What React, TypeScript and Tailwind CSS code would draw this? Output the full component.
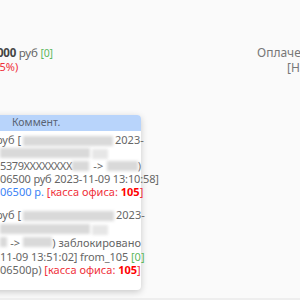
import React from 'react';

// blurred placeholder for hidden personal data
const Blur = ({ w, light }: { w: number; light?: boolean }) => (
  <span
    className={`inline-block h-[10px] align-middle blur-[1.5px] ${light ? 'bg-[#e6e6e6]' : 'bg-[#d9d9d9]'}`}
    style={{ width: w }}
  />
);

const Kassa = () => (
  <span className="text-[#f0303a]">
    [касса офиса: <b className="font-bold text-[#ff0000]">105</b>]
  </span>
);

const Line = ({ children, shift = 0, h = 13 }: { children: React.ReactNode; shift?: number; h?: number }) => (
  <div className="flex items-center whitespace-nowrap leading-[13px]" style={{ marginLeft: shift, height: h }}>
    {children}
  </div>
);

export default function App() {
  return (
    <div className="relative h-[300px] w-[300px] overflow-hidden bg-[#fafafa] font-['Noto_Sans',sans-serif] text-[11px] text-[#666]">
      {/* top summary row */}
      <div className="pt-[45px]">
        <div className="flex h-[15px] items-center whitespace-nowrap">
          <div className="ml-[-25px] text-[11.5px] tracking-[-0.2px]">
            <b className="font-bold text-[#444]">106 000</b> руб{' '}
            <span className="text-[10.5px] text-[#5cb85c]">[0]</span>
          </div>
          <div className="ml-auto mr-[-20px] w-[63px] text-[12px] text-[#777]">Оплачено</div>
        </div>
        <div className="flex h-[15px] items-center whitespace-nowrap">
          <div className="ml-[-4px] text-[11px] text-[#f0303a]">-5%)</div>
          <div className="ml-auto mr-[-40px] w-[53px] text-[12px] text-[#777]">[Наличные]</div>
        </div>
      </div>

      {/* comment popup */}
      <div className="ml-[-12px] mt-[40px] w-[153px] rounded-[4px] bg-white shadow-[0_2px_7px_rgba(0,0,0,0.2)]">
        <div className="flex h-[16px] items-center rounded-t-[4px] bg-[#b8d4fb] pl-[24px] text-[10.5px] text-[#5a6474]">
          Коммент.
        </div>
        <div className="pb-[13px] pl-[12px] pt-[2px] text-[#666]">
          <Line shift={-4}>
            руб [<span className="mx-[2px]"><Blur w={90} /></span>2023-
          </Line>
          <Line>
            <Blur w={90} />
            <span className="ml-[2px]"><Blur w={16} light /></span>
          </Line>
          <Line>
            <span className="tracking-[-0.4px]">5379XXXXXXXX</span>
            <Blur w={20} />
            <span className="mx-[4px]">-&gt;</span>
            <Blur w={35} />)
          </Line>
          <Line>
            <span className="tracking-[-0.15px]">06500 руб 2023-11-09 13:10:58]</span>
          </Line>
          <Line>
            <span className="text-[#3b82f6]">06500 р.</span>&nbsp;<Kassa />
          </Line>
          <div className="h-[10px]" />
          <Line shift={-4} h={13.75}>
            руб [<span className="mx-[2px]"><Blur w={91} /></span>2023-
          </Line>
          <Line h={13.75}>
            <Blur w={90} />
            <span className="ml-[2px]"><Blur w={16} light /></span>
          </Line>
          <Line h={13.75}>
            <Blur w={10} />
            <span className="mx-[3px]">-&gt;</span>
            <Blur w={40} />) заблокировано
          </Line>
          <Line h={13.75}>
            <span className="tracking-[-0.1px]">11-09 13:51:02] from_105</span>&nbsp;
            <span className="text-[#5cb85c]">[0]</span>
          </Line>
          <Line h={13.75}>
            06500р)&nbsp;<Kassa />
          </Line>
        </div>
      </div>

      <div className="absolute bottom-0 left-0 h-[2px] w-full bg-[#eeeeee]" />
    </div>
  );
}
